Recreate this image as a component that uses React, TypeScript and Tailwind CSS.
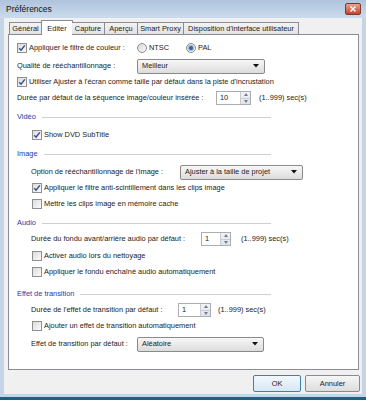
import React from "react";

function Check({ checked }: { checked?: boolean }) {
  return (
    <span className="flex h-[10px] w-[10px] shrink-0 items-center justify-center border border-[#8e8f8f] bg-gradient-to-br from-[#dcdcdc] to-[#fbfbfb]">
      {checked && (
        <svg width="8" height="8" viewBox="0 0 8 8">
          <path d="M1.2 4.2 L3.1 6.2 L6.8 1.4" fill="none" stroke="#3a4f8c" strokeWidth="1.5" />
        </svg>
      )}
    </span>
  );
}

function Radio({ checked }: { checked?: boolean }) {
  return (
    <span className="flex h-[10px] w-[10px] shrink-0 items-center justify-center rounded-full border border-[#8e8f8f] bg-gradient-to-br from-[#d6d6d6] to-[#fafafa]">
      {checked && <span className="h-[4px] w-[4px] rounded-full bg-[#3563a8] ring-1 ring-[#9bb7dd]" />}
    </span>
  );
}

function Dropdown({ text, w }: { text: string; w: string }) {
  return (
    <div className={`flex h-[15px] ${w} shrink-0 items-center justify-between rounded-[2px] border border-[#8a8a8a] bg-gradient-to-b from-[#f7f7f7] to-[#dcdcdc] pl-[4px] pr-[5px]`}>
      <span>{text}</span>
      <svg width="6" height="4" viewBox="0 0 6 4">
        <path d="M0 0 H6 L3 3.5 Z" fill="#111" />
      </svg>
    </div>
  );
}

function Spin({ value, w }: { value: string; w: string }) {
  return (
    <div className={`flex h-[14px] ${w} shrink-0 border border-[#abadb3] bg-white`}>
      <span className="flex-1 pl-[3px] leading-[12px]">{value}</span>
      <div className="flex w-[10px] flex-col border-l border-[#c9cdd3] bg-gradient-to-b from-[#f3f3f3] to-[#dfe3e8]">
        <div className="flex flex-1 items-center justify-center border-b border-[#c9cdd3]">
          <svg width="4" height="3" viewBox="0 0 4 3"><path d="M0 3 L2 0 L4 3 Z" fill="#6b7f99" /></svg>
        </div>
        <div className="flex flex-1 items-center justify-center">
          <svg width="4" height="3" viewBox="0 0 4 3"><path d="M0 0 L2 3 L4 0 Z" fill="#6b7f99" /></svg>
        </div>
      </div>
    </div>
  );
}

function Section({ title, mt }: { title: string; mt: string }) {
  return (
    <div className={`${mt} flex h-[16px] w-[254px] items-center gap-[6px]`}>
      <span className="text-[#1f3aa6]">{title}</span>
      <span className="h-px flex-1 bg-[#cfcfcf]" />
    </div>
  );
}

const TABS = [
  { label: "Général", w: "w-[33px]" },
  { label: "Editer", w: "w-[32px]", active: true },
  { label: "Capture", w: "w-[33px]" },
  { label: "Aperçu", w: "w-[33px]" },
  { label: "Smart Proxy", w: "w-[46px]" },
  { label: "Disposition d'interface utilisateur", w: "w-[115px]" },
];

export default function App() {
  return (
    <div className="flex h-[400px] w-[366px] flex-col bg-[#c5d5e8] font-['Liberation_Sans',Arial,sans-serif] text-[7.4px] text-[#1b1b1b]">
      {/* Title bar */}
      <div className="flex h-[18px] shrink-0 items-center justify-between bg-gradient-to-b from-[#aec4dd] to-[#cbdbee] pl-[6px] pr-[5px]">
        <span className="text-[8.5px] text-[#111]">Préférences</span>
        <div className="flex h-[12px] w-[16px] items-center justify-center rounded-[2px] border border-[#7a3a30] bg-gradient-to-b from-[#e8a090] to-[#c2432d]">
          <svg width="6" height="6" viewBox="0 0 6 6">
            <path d="M0.5 0.5 L5.5 5.5 M5.5 0.5 L0.5 5.5" stroke="#fff" strokeWidth="1.4" />
          </svg>
        </div>
      </div>

      {/* Client area */}
      <div className="mx-[4px] flex h-[376px] shrink-0 flex-col bg-[#f0f0f0]">
        {/* Tabs */}
        <div className="relative z-10 ml-[5px] flex h-[16px] items-end">
          {TABS.map((t) =>
            t.active ? (
              <div
                key={t.label}
                className={`${t.w} -mx-[1px] -mb-px flex h-[15px] items-start justify-center border border-b-0 border-[#898c95] bg-white pt-[2px]`}
              >
                {t.label}
              </div>
            ) : (
              <div
                key={t.label}
                className={`${t.w} flex h-[12px] items-center justify-center border border-b-0 border-l-0 border-[#898c95] bg-gradient-to-b from-[#f3f3f3] to-[#e2e2e2] first:border-l`}
              >
                {t.label}
              </div>
            )
          )}
        </div>

        {/* Panel */}
        <div className="ml-[4px] flex h-[336px] w-[351px] flex-col border border-[#898c95] bg-white px-[8px] pt-[5px]">
          <div className="flex h-[16px] items-center">
            <div className="flex w-[120px] items-center gap-[2px]">
              <Check checked />
              <span>Appliquer le filtre de couleur :</span>
            </div>
            <div className="flex w-[49px] items-center gap-[2px]">
              <Radio />
              <span>NTSC</span>
            </div>
            <div className="flex items-center gap-[2px]">
              <Radio checked />
              <span>PAL</span>
            </div>
          </div>

          <div className="mt-[2px] flex h-[16px] items-center">
            <span className="w-[120px]">Qualité de rééchantillonnage :</span>
            <Dropdown text="Meilleur" w="w-[128px]" />
          </div>

          <div className="flex h-[16px] items-center gap-[2px]">
            <Check checked />
            <span>Utiliser Ajuster à l'écran comme taille par défaut dans la piste d'incrustation</span>
          </div>

          <div className="flex h-[16px] items-center">
            <span className="w-[199px]">Durée par défaut de la séquence image/couleur insérée :</span>
            <Spin value="10" w="w-[35px]" />
            <span className="ml-[8px]">(1..999) sec(s)</span>
          </div>

          <Section title="Vidéo" mt="mt-[3px]" />
          <div className="mt-[2px] flex h-[16px] items-center gap-[2px] pl-[15px]">
            <Check checked />
            <span>Show DVD SubTitle</span>
          </div>

          <Section title="Image" mt="mt-[3px]" />
          <div className="mt-[2px] flex h-[16px] items-center pl-[14px]">
            <span className="w-[149px]">Option de rééchantillonnage de l'image :</span>
            <Dropdown text="Ajuster à la taille de projet" w="w-[123px]" />
          </div>
          <div className="flex h-[16px] items-center gap-[2px] pl-[15px]">
            <Check checked />
            <span>Appliquer le filtre anti-scintillement dans les clips image</span>
          </div>
          <div className="flex h-[16px] items-center gap-[2px] pl-[15px]">
            <Check />
            <span>Mettre les clips image en mémoire cache</span>
          </div>

          <Section title="Audio" mt="mt-[3px]" />
          <div className="flex h-[16px] items-center pl-[14px]">
            <span className="w-[170px]">Durée du fondu avant/arrière audio par défaut :</span>
            <Spin value="1" w="w-[30px]" />
            <span className="ml-[10px]">(1..999) sec(s)</span>
          </div>
          <div className="mt-[1px] flex h-[16px] items-center gap-[2px] pl-[15px]">
            <Check />
            <span>Activer audio lors du nettoyage</span>
          </div>
          <div className="flex h-[16px] items-center gap-[2px] pl-[15px]">
            <Check />
            <span>Appliquer le fondu enchaîné audio automatiquement</span>
          </div>

          <Section title="Effet de transition" mt="mt-[6px]" />
          <div className="flex h-[16px] items-center pl-[14px]">
            <span className="w-[147px]">Durée de l'effet de transition par défaut :</span>
            <Spin value="1" w="w-[33px]" />
            <span className="ml-[7px]">(1..999) sec(s)</span>
          </div>
          <div className="flex h-[16px] items-center gap-[2px] pl-[15px]">
            <Check />
            <span>Ajouter un effet de transition automatiquement</span>
          </div>
          <div className="mt-[2px] flex h-[16px] items-center pl-[14px]">
            <span className="w-[106px]">Effet de transition par défaut :</span>
            <Dropdown text="Aléatoire" w="w-[127px]" />
          </div>
        </div>

        {/* Buttons */}
        <div className="mt-[5px] flex justify-end gap-[4px] pr-[2px]">
          <button className="flex h-[17px] w-[48px] items-center justify-center rounded-[2px] border border-[#3c7fb1] bg-gradient-to-b from-[#f2f8fc] to-[#d6e8f5]">
            OK
          </button>
          <button className="flex h-[17px] w-[55px] items-center justify-center rounded-[2px] border border-[#8a8a8a] bg-gradient-to-b from-[#f6f6f6] to-[#dddddd]">
            Annuler
          </button>
        </div>
      </div>

      <div className="flex-1" />
      <div className="h-[3px] shrink-0 bg-[#1d6180]" />
    </div>
  );
}
